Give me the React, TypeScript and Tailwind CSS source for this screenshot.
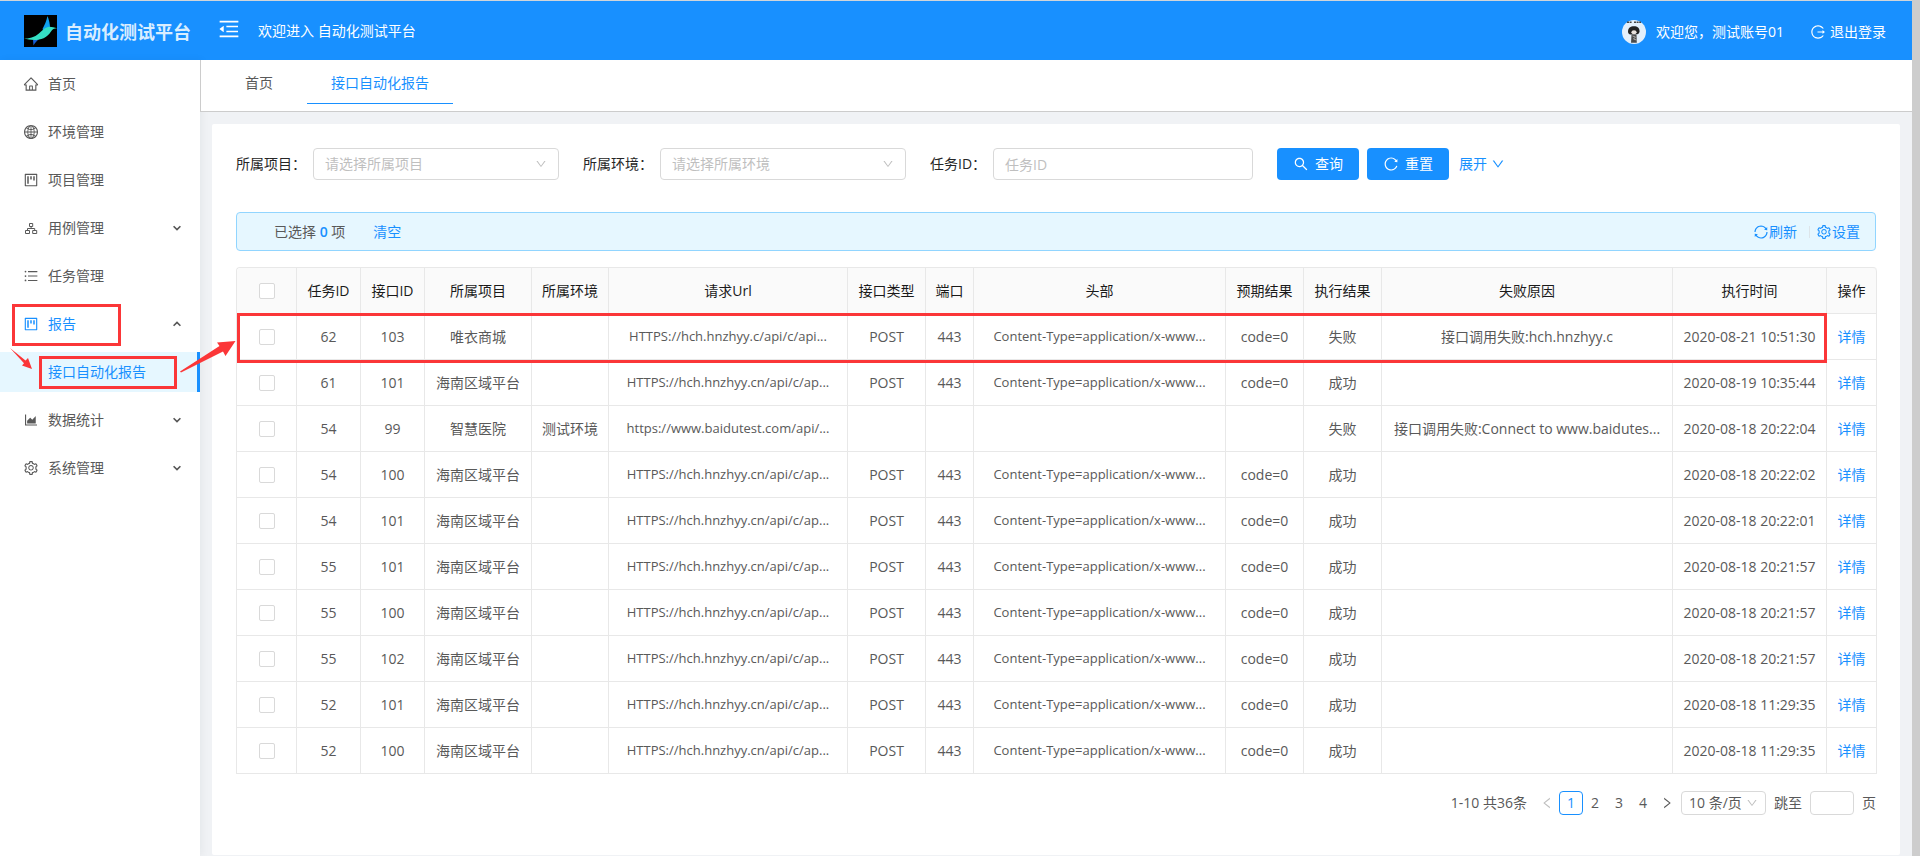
import { useState } from "react";
import type { ComponentType, ReactNode } from "react";
import {
  AiOutlineAreaChart,
  AiOutlineDown,
  AiOutlineGlobal,
  AiOutlineHome,
  AiOutlineLeft,
  AiOutlineLogout,
  AiOutlineMenuFold,
  AiOutlineProject,
  AiOutlineReload,
  AiOutlineRight,
  AiOutlineSearch,
  AiOutlineSetting,
  AiOutlineSync,
  AiOutlineUnorderedList,
} from "react-icons/ai";

type MenuItem = {
  label: string;
  icon: ComponentType<{ className?: string }>;
  arrow?: "down" | "up";
  active?: boolean;
};

function CaseIcon({ className }: { className?: string }) {
  return (
    <svg className={className} viewBox="0 0 16 16" fill="none" stroke="currentColor" aria-hidden="true">
      <path d="M6.500 3.500h3.200v3H6.500zM2.500 10.500h4v3h-4zM9.700 10.500h4v3h-4z" />
      <path d="M8.100 6.500v2M4.500 10.500v-2h7.200v2" />
    </svg>
  );
}

const menuTop: MenuItem[] = [
  { label: "首页", icon: AiOutlineHome },
  { label: "环境管理", icon: AiOutlineGlobal },
  { label: "项目管理", icon: AiOutlineProject },
  { label: "用例管理", icon: CaseIcon, arrow: "down" },
  { label: "任务管理", icon: AiOutlineUnorderedList },
  { label: "报告", icon: AiOutlineProject, arrow: "up", active: true },
];

const menuBottom: MenuItem[] = [
  { label: "数据统计", icon: AiOutlineAreaChart, arrow: "down" },
  { label: "系统管理", icon: AiOutlineSetting, arrow: "down" },
];

const columns = [
  { title: "任务ID", width: 64 },
  { title: "接口ID", width: 64 },
  { title: "所属项目", width: 107 },
  { title: "所属环境", width: 77 },
  { title: "请求Url", width: 239, small: true },
  { title: "接口类型", width: 78 },
  { title: "端口", width: 48 },
  { title: "头部", width: 252, small: true },
  { title: "预期结果", width: 78 },
  { title: "执行结果", width: 78 },
  { title: "失败原因", width: 291 },
  { title: "执行时间", width: 154 },
  { title: "操作", width: 50 },
];

const CN_URL = "HTTPS://hch.hnzhyy.cn/api/c/ap...";
const HEAD = "Content-Type=application/x-www...";

function hainan(task: string, api: string, time: string) {
  return [task, api, "海南区域平台", "", CN_URL, "POST", "443", HEAD, "code=0", "成功", "", time];
}

const rows: string[][] = [
  ["62", "103", "唯衣商城", "", "HTTPS://hch.hnzhyy.c/api/c/api...", "POST", "443", HEAD, "code=0", "失败", "接口调用失败:hch.hnzhyy.c", "2020-08-21 10:51:30"],
  hainan("61", "101", "2020-08-19 10:35:44"),
  ["54", "99", "智慧医院", "测试环境", "https://www.baidutest.com/api/...", "", "", "", "", "失败", "接口调用失败:Connect to www.baidutes...", "2020-08-18 20:22:04"],
  hainan("54", "100", "2020-08-18 20:22:02"),
  hainan("54", "101", "2020-08-18 20:22:01"),
  hainan("55", "101", "2020-08-18 20:21:57"),
  hainan("55", "100", "2020-08-18 20:21:57"),
  hainan("55", "102", "2020-08-18 20:21:57"),
  hainan("52", "101", "2020-08-18 11:29:35"),
  hainan("52", "100", "2020-08-18 11:29:35"),
];

function Logo() {
  return (
    <svg className="h-8 w-[33px] shrink-0" viewBox="0 0 33 32" aria-hidden="true">
      <rect width="33" height="32" fill="#000" />
      <path d="M23.500 1c1.500 4 2.600 8 2.500 12l-6 4c-.5-1.500-1-2.500-1.500-3C20.500 10 22.500 6 23.500 1z" fill="#0fa0f0" />
      <path d="M9 25l7-1.500c-3 2-5 4-6.500 7z" fill="#1560d8" />
      <path d="M0 23.500c7 .3 12-2 16.500-6.500 3-3 6-5 9-5.200 2.500 0 5 .8 7.500 1.500-3 .2-4.500 1-6 3.200-4 6.500-10 8.500-17 8.500-3.500-.2-7-.7-10-1.500z" fill="#35e0c4" />
    </svg>
  );
}

function Avatar() {
  return (
    <svg className="size-6" viewBox="0 0 24 24" aria-hidden="true">
      <circle cx="12" cy="12" r="12" fill="#e3effb" />
      <path d="M5 2.200h5M12 2.200h7" stroke="#444" strokeWidth="1.500" strokeDasharray="2 .6" />
      <path d="M6 11.500C6 8 8.500 6.200 12 6.200s5.500 1.800 5.500 5c0 1.800-1 2.800-2.200 3L8 14.500c-1.200-.3-2-1.500-2-3z" fill="#222" />
      <ellipse cx="12" cy="12.200" rx="2.600" ry="2" fill="#e8e2de" />
      <path d="M9.500 14.500h5l.3 8.300H9z" fill="#4a4a4a" />
      <path d="M10.500 16l3 1-2 2 3 1" stroke="#bbb" fill="none" strokeWidth=".8" />
    </svg>
  );
}

function MenuArrow({ dir }: { dir: "down" | "up" }) {
  return (
    <svg className="ml-auto size-2" viewBox="0 0 8 8" fill="none" stroke="#555" strokeWidth="1.600" aria-hidden="true">
      <path d={dir === "down" ? "M.6 2.200L4 5.600l3.400-3.400" : "M.6 5.800L4 2.400l3.400 3.400"} />
    </svg>
  );
}

function MenuRow({ item }: { item: MenuItem }) {
  const Icon = item.icon;
  return (
    <li className="relative">
      <a
        href="#"
        className={`flex h-10 items-center pr-[19px] pl-[23px] ${item.active ? "text-[#1890ff]" : "text-[#595959]"}`}
      >
        <Icon className="size-4 shrink-0" />
        <span className="ml-[9px]">{item.label}</span>
        {item.arrow && <MenuArrow dir={item.arrow} />}
      </a>
      {item.active && (
        <span className="pointer-events-none absolute top-0 left-3 h-[42px] w-[109px] border-3 border-[#fb3638]" />
      )}
    </li>
  );
}

function SelectBox({ id, placeholder }: { id: string; placeholder: string }) {
  return (
    <div className="relative min-w-0 flex-1">
      <select
        id={id}
        className="h-8 w-full appearance-none rounded border border-[#d9d9d9] bg-white px-[11px] text-[#bfbfbf]"
      >
        <option>{placeholder}</option>
      </select>
      <AiOutlineDown className="pointer-events-none absolute top-2.5 right-3 size-3 text-[#bfbfbf]" />
    </div>
  );
}

function Field({ id, label, children }: { id: string; label: string; children: ReactNode }) {
  return (
    <div className="mr-6 flex w-[323px] items-center gap-[7px]">
      <label htmlFor={id} className="shrink-0 text-[#262626]">
        {label}
      </label>
      {children}
    </div>
  );
}

function Checkbox({ label }: { label: string }) {
  return (
    <input
      type="checkbox"
      aria-label={label}
      className="mx-auto block size-4 appearance-none rounded-xs border border-[#d9d9d9] bg-white checked:bg-[#1890ff]"
    />
  );
}

function ReportTable() {
  return (
    <div className="relative mt-4">
      <table className="w-full table-fixed border-separate border-spacing-0 rounded-t border-t border-l border-[#e8e8e8] text-center text-[#595959]">
        <colgroup>
          <col style={{ width: 60 }} />
          {columns.map((c) => (
            <col key={c.title} style={{ width: c.width }} />
          ))}
        </colgroup>
        <thead>
          <tr className="h-[46px]">
            <th className="rounded-tl border-r border-b border-[#e8e8e8] bg-[#fafafa]">
              <Checkbox label="全选" />
            </th>
            {columns.map((c) => (
              <th
                key={c.title}
                className="border-r border-b border-[#e8e8e8] bg-[#fafafa] font-normal whitespace-nowrap text-[#1a1a1a] last:rounded-tr"
              >
                {c.title}
              </th>
            ))}
          </tr>
        </thead>
        <tbody>
          {rows.map((row, i) => (
            <tr key={i} className="h-[46px]">
              <td className="border-r border-b border-[#e8e8e8]">
                <Checkbox label={`选择第${i + 1}行`} />
              </td>
              {row.map((cell, j) => (
                <td
                  key={j}
                  className={`border-r border-b border-[#e8e8e8] whitespace-nowrap ${columns[j].small ? "text-[13px]" : ""}`}
                >
                  {cell}
                </td>
              ))}
              <td className="border-r border-b border-[#e8e8e8]">
                <a href="#" className="text-[#1890ff]">
                  详情
                </a>
              </td>
            </tr>
          ))}
        </tbody>
      </table>
      <div className="pointer-events-none absolute top-[46px] right-[49px] left-px h-[50px] border-3 border-[#fb3638]" />
    </div>
  );
}

function Pagination() {
  const [page, setPage] = useState(1);
  return (
    <nav className="mt-[17px] flex h-6 items-center justify-end text-[#595959]">
      <span className="mr-2">1-10 共36条</span>
      <button type="button" aria-label="上一页" className="flex size-6 items-center justify-center text-[#bfbfbf]">
        <AiOutlineLeft className="size-3.5" />
      </button>
      {[1, 2, 3, 4].map((n) => (
        <button
          key={n}
          type="button"
          onClick={() => setPage(n)}
          className={`size-6 rounded ${n === page ? "border border-[#1890ff] text-[#1890ff]" : ""}`}
        >
          {n}
        </button>
      ))}
      <button type="button" aria-label="下一页" className="flex size-6 items-center justify-center">
        <AiOutlineRight className="size-3.5" />
      </button>
      <div className="relative ml-0.5">
        <select
          aria-label="每页条数"
          className="h-6 w-[85px] appearance-none rounded border border-[#d9d9d9] bg-white pl-[7px] leading-5"
        >
          <option>10 条/页</option>
        </select>
        <AiOutlineDown className="pointer-events-none absolute top-1.5 right-2 size-3 text-[#bfbfbf]" />
      </div>
      <label htmlFor="jump" className="mx-2">
        跳至
      </label>
      <input id="jump" className="h-6 w-11 rounded border border-[#d9d9d9] px-2" />
      <span className="ml-2">页</span>
    </nav>
  );
}

export default function App() {
  return (
    <div className="relative flex min-h-screen bg-[#cdcdcd] pr-2 font-['Open_Sans','Noto_Sans_CJK_SC',sans-serif] text-sm">
      <div className="flex min-w-0 flex-1 flex-col bg-[#f0f2f5]">
        <header className="flex h-[60px] items-center border-t border-[#d0d5da] bg-[#1890ff] pr-[26px] pl-6 text-white">
          <Logo />
          <h1 className="ml-2 pt-0.5 text-lg font-bold whitespace-nowrap text-[#d9edff]">自动化测试平台</h1>
          <button type="button" aria-label="收起菜单" className="mb-1 ml-[26px]">
            <AiOutlineMenuFold className="size-6" />
          </button>
          <span className="ml-[17px]">欢迎进入 自动化测试平台</span>
          <div className="ml-auto flex items-center pt-0.5">
            <Avatar />
            <span className="ml-2.5">欢迎您，测试账号01</span>
            <a href="#" className="ml-[26px] flex items-center gap-1">
              <AiOutlineLogout className="size-4" />
              退出登录
            </a>
          </div>
        </header>

        <div className="flex flex-1">
          <aside className="w-[200px] shrink-0 bg-white shadow-[2px_0_8px_rgba(29,35,41,0.05)]">
            <ul className="flex flex-col gap-2 pt-1">
              {menuTop.map((item) => (
                <MenuRow key={item.label} item={item} />
              ))}
              <li className="relative">
                <a
                  href="#"
                  className="flex h-10 items-center border-r-3 border-[#1890ff] bg-[#e6f7ff] pl-12 text-[#1890ff]"
                >
                  接口自动化报告
                </a>
                <span className="pointer-events-none absolute top-1 left-[39px] h-[33px] w-[138px] border-3 border-[#fb3638]" />
              </li>
              {menuBottom.map((item) => (
                <MenuRow key={item.label} item={item} />
              ))}
            </ul>
          </aside>

          <main className="flex min-w-0 flex-1 flex-col">
            <nav className="flex h-[52px] gap-0.5 border-b border-l border-[#cccccc] bg-white pl-3 text-[#595959]">
              <a href="#" className="h-11 px-8 pt-[13px]">
                首页
              </a>
              <a href="#" className="h-11 border-b border-[#1890ff] px-6 pt-[13px] text-[#1890ff]">
                接口自动化报告
              </a>
            </nav>

            <section className="mx-3 mt-3 mb-px flex-1 rounded-xs bg-white p-6">
              <form className="flex items-center" onSubmit={(e) => e.preventDefault()}>
                <Field id="project" label="所属项目：">
                  <SelectBox id="project" placeholder="请选择所属项目" />
                </Field>
                <Field id="env" label="所属环境：">
                  <SelectBox id="env" placeholder="请选择所属环境" />
                </Field>
                <Field id="task" label="任务ID：">
                  <input
                    id="task"
                    placeholder="任务ID"
                    className="h-8 min-w-0 flex-1 rounded border border-[#d9d9d9] px-[11px] placeholder:text-[#bfbfbf]"
                  />
                </Field>
                <button
                  type="submit"
                  className="flex h-8 w-[82px] items-center justify-center gap-1.5 rounded bg-[#1890ff] text-white"
                >
                  <AiOutlineSearch className="size-4" />
                  查询
                </button>
                <button
                  type="reset"
                  className="ml-2 flex h-8 w-[82px] items-center justify-center gap-1.5 rounded bg-[#1890ff] text-white"
                >
                  <AiOutlineReload className="size-4" />
                  重置
                </button>
                <a href="#" className="ml-2.5 flex items-center gap-1 text-[#1890ff]">
                  展开
                  <AiOutlineDown className="size-3.5" />
                </a>
              </form>

              <div className="mt-8 flex h-[39px] items-center rounded border border-[#91d5ff] bg-[#e6f7ff] pr-[15px] pl-[37px] text-[#595959]">
                <span>
                  已选择 <b className="font-semibold text-[#1890ff]">0</b> 项
                </span>
                <a href="#" className="ml-7 text-[#1890ff]">
                  清空
                </a>
                <button type="button" className="ml-auto flex items-center text-[#1890ff]">
                  <AiOutlineSync className="size-4" />
                  刷新
                </button>
                <span className="mr-1.5 ml-3 h-3 w-px bg-[#dde5ea]" />
                <button type="button" className="flex items-center text-[#1890ff]">
                  <AiOutlineSetting className="size-4" />
                  设置
                </button>
              </div>

              <ReportTable />
              <Pagination />
            </section>
          </main>
        </div>
      </div>

      {/* callout arrows between the marked menu entries and the first row */}
      <svg
        className="pointer-events-none absolute top-[336px] left-0 h-12 w-60"
        viewBox="0 0 240 48"
        fill="#fb3638"
        aria-hidden="true"
      >
        <path d="M10 12l15.500 12.500L28 22l4 11-10-3.500 2-2.200z" />
        <path d="M180 35.500L219.500 10 217 6.500 235.500 5l-10 15-2.500-4.500L181 36.500z" />
      </svg>
    </div>
  );
}
